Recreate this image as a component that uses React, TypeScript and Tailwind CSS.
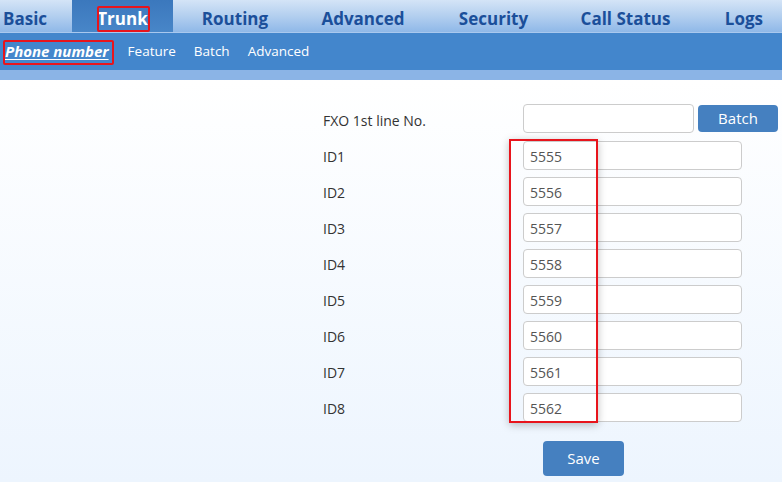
const topNav = [
  { label: "Basic", w: "w-[72px]", align: "justify-start pl-[3px]" },
  { label: "Trunk", w: "w-[101px]", align: "justify-center", active: true },
  { label: "Routing", w: "w-[124px]", align: "justify-center" },
  { label: "Advanced", w: "w-[132px]", align: "justify-center" },
  { label: "Security", w: "w-[129px]", align: "justify-center" },
  { label: "Call Status", w: "w-[135px]", align: "justify-center" },
  { label: "Logs", w: "flex-1", align: "justify-end pr-[19px]" },
]

const ids = ["5555", "5556", "5557", "5558", "5559", "5560", "5561", "5562"]

export default function App() {
  return (
    <div className="relative w-[782px] h-[482px] overflow-hidden font-['Open_Sans',sans-serif]">
      {/* main nav */}
      <div className="flex h-[33px] bg-gradient-to-b from-[#d4e4f7] via-[#b3cfef] to-[#8fb8e8] border-b border-[#a9c8ee]">
        {topNav.map((n) => (
          <div
            key={n.label}
            className={`${n.w} flex items-center pt-[6px] ${n.align} text-[17px] font-bold ${
              n.active ? "bg-gradient-to-b from-[#3b78bd] to-[#4886c8] text-white" : "text-[#1b4f9a]"
            }`}
          >
            {n.label}
          </div>
        ))}
      </div>

      {/* sub nav */}
      <div className="flex items-center h-[37px] bg-[#4386cc] text-white text-[13.5px] pl-[5px] gap-[18px]">
        <span className="font-bold italic underline underline-offset-2 text-[15px] mr-[1px]">Phone number</span>
        <span>Feature</span>
        <span>Batch</span>
        <span>Advanced</span>
      </div>
      <div className="h-[10px] bg-[#8bb4e6]" />

      {/* body */}
      <div className="h-[402px] bg-gradient-to-b from-white to-[#edf5fe] pt-[24px] pl-[323px] text-[14px] text-[#333]">
        <div className="flex items-center h-[29px] mb-[8px]">
          <div className="w-[200px] pt-[4px]">FXO 1st line No.</div>
          <input className="w-[171px] h-[29px] border border-[#ccc] rounded-[4px] bg-white" />
          <button className="ml-[4px] w-[80px] h-[27px] rounded-[4px] bg-[#4580c0] text-white text-[15px]">Batch</button>
        </div>
        <div className="flex flex-col gap-[7px]">
          {ids.map((v, i) => (
            <div key={v} className="flex items-center h-[29px]">
              <div className="w-[200px] pt-[1px]">ID{i + 1}</div>
              <div className="w-[219px] h-[29px] border border-[#ccc] rounded-[4px] bg-white flex items-center pl-[6px] pt-[2px] text-[#555]">
                {v}
              </div>
            </div>
          ))}
        </div>
        <button className="mt-[19px] ml-[220px] w-[81px] h-[35px] rounded-[4px] bg-[#4580c0] text-white text-[15px]">Save</button>
      </div>

      {/* annotation boxes */}
      <div className="absolute left-[97px] top-[6px] w-[53px] h-[26px] border-2 border-[#e8141c] rounded-[2px]" />
      <div className="absolute left-[3px] top-[40px] w-[111px] h-[25px] border-2 border-[#e8141c] rounded-[2px]" />
      <div className="absolute left-[509px] top-[139px] w-[89px] h-[284px] border-2 border-[#e8141c] shadow-[0_2px_8px_rgba(0,0,0,0.25)]" />
    </div>
  )
}
